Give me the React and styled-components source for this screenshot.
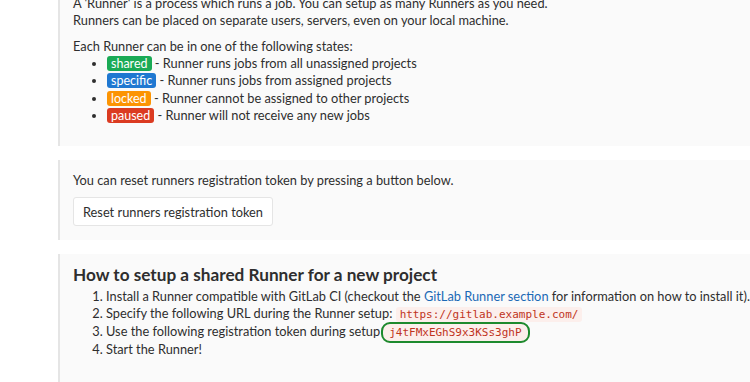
import React from "react";
import styled, { createGlobalStyle } from "styled-components";

const Global = createGlobalStyle`
  html, body { margin: 0; padding: 0; background: #fff; }
  body {
    font-family: Lato, "Open Sans", sans-serif;
    font-size: 12.8px;
    color: #2e2e2e;
    overflow: hidden;
  }
`;

const Page = styled.div`
  padding-left: 58px;
  margin-top: -21px;
  margin-right: -60px;
  display: flex;
  flex-direction: column;
  gap: 14px;
`;

const Panel = styled.section`
  background: #fafafa;
  border-left: 2px solid #e5e5e5;
  padding: ${(p) => p.$pad || "16px 13px"};
  line-height: 17px;
`;

const P = styled.p`
  margin: 0 0 ${(p) => p.$mb || 0}px;
`;

const Ul = styled.ul`
  margin: 0;
  padding-left: 34px;
  list-style: disc;
  li { line-height: 17.3px; }
`;

const Badge = styled.span`
  display: inline-block;
  background: ${(p) => p.$bg};
  color: #fff;
  font-size: 12.5px;
  line-height: 15px;
  padding: 0 4px;
  border-radius: 3px;
`;

const Button = styled.button`
  font-family: inherit;
  font-size: 12.8px;
  color: #2e2e2e;
  background: #fff;
  border: 1px solid #e5e5e5;
  border-radius: 3px;
  padding: 6px 9px;
  line-height: 14px;
  height: 29px;
  cursor: pointer;
`;

const H4 = styled.h4`
  margin: 0 0 2px;
  font-size: 17.2px;
  font-weight: 700;
  line-height: 22px;
`;

const Ol = styled.ol`
  margin: 0;
  padding-left: 33px;
  li { line-height: 17px; white-space: nowrap; }
`;

const Link = styled.a`
  color: #1b69b6;
  text-decoration: none;
`;

const Code = styled.code`
  font-family: "DejaVu Sans Mono", monospace;
  font-size: 11px;
  color: #c0341d;
  background: #fcefec;
  padding: 1px 4px;
  border-radius: 3px;
  ${(p) =>
    p.$outlined &&
    `
    border: 2px solid #1d8a2e;
    border-radius: 9px;
    padding: 2px 6px;
    margin-left: 1px;
  `}
`;

export default function App() {
  return (
    <>
      <Global />
      <Page>
        <Panel $pad="16px 13px 22px">
          <P>A 'Runner' is a process which runs a job. You can setup as many Runners as you need.</P>
          <P $mb={9}>Runners can be placed on separate users, servers, even on your local machine.</P>
          <P>Each Runner can be in one of the following states:</P>
          <Ul>
            <li><Badge $bg="#1aaa55">shared</Badge> - Runner runs jobs from all unassigned projects</li>
            <li><Badge $bg="#1f78d1">specific</Badge> - Runner runs jobs from assigned projects</li>
            <li><Badge $bg="#fc9403">locked</Badge> - Runner cannot be assigned to other projects</li>
            <li><Badge $bg="#db3b21">paused</Badge> - Runner will not receive any new jobs</li>
          </Ul>
        </Panel>
        <Panel $pad="12px 13px 14px">
          <P $mb={8}>You can reset runners registration token by pressing a button below.</P>
          <Button>Reset runners registration token</Button>
        </Panel>
        <Panel $pad="10px 13px 30px">
          <H4>How to setup a shared Runner for a new project</H4>
          <Ol>
            <li>Install a Runner compatible with GitLab CI (checkout the <Link href="#">GitLab Runner section</Link> for information on how to install it).</li>
            <li>Specify the following URL during the Runner setup: <Code>https://gitlab.example.com/</Code></li>
            <li>Use the following registration token during setup<Code $outlined>j4tFMxEGhS9x3KSs3ghP</Code></li>
            <li>Start the Runner!</li>
          </Ol>
        </Panel>
      </Page>
    </>
  );
}
